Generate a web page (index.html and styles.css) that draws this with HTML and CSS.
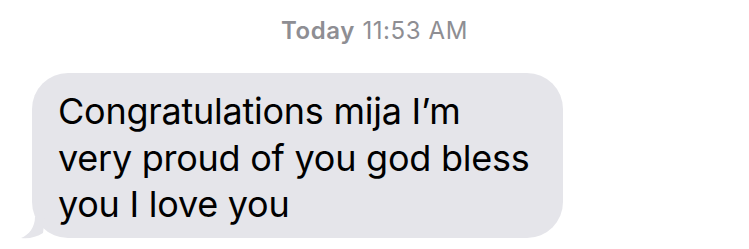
FILE: index.html
```html
<!DOCTYPE html>
<html lang="en">
<head>
  <meta charset="UTF-8">
  <meta name="viewport" content="width=device-width, initial-scale=1.0">
  <title>Messages</title>
  <link rel="stylesheet" href="styles.css">
</head>

<body>
  <div class="thread">
    <div class="timestamp"><strong>Today</strong> 11:53 AM</div>

    <div class="row">
      <div class="bubble">
        Congratulations mija I’m very proud of you god bless you I love you
        <svg class="tail" width="24" height="22" viewBox="0 0 24 22">
          <path d="M14 0 C14 10 8 18 0 21 C8 22 16 20 22 16 L24 0 Z" fill="#e5e5ea"/>
        </svg>
      </div>
    </div>
  </div>
</body>
</html>
```

FILE: styles.css
```css
* {
  margin: 0;
  padding: 0;
  box-sizing: border-box;
}

body {
  font-family: 'Inter', 'Liberation Sans', sans-serif;
  background: #fff;
  color: #000;
  width: 749px;
  height: 249px;
  overflow: hidden;
}

.thread {
  display: flex;
  flex-direction: column;
  padding-top: 16px;
}

.timestamp {
  text-align: center;
  font-size: 24px;
  line-height: 30px;
  letter-spacing: 0.6px;
  color: #8e8e93;
}

.timestamp strong {
  font-weight: 600;
}

.row {
  display: flex;
  padding-left: 32px;
  margin-top: 27px;
}

.bubble {
  position: relative;
  width: 531px;
  height: 165px;
  background: #e5e5ea;
  border-radius: 36px;
  padding: 15px 26px 0 26px;
  font-size: 36px;
  line-height: 46.5px;
  letter-spacing: -0.25px;
}

.tail {
  position: absolute;
  left: -11px;
  bottom: -1px;
}
```
